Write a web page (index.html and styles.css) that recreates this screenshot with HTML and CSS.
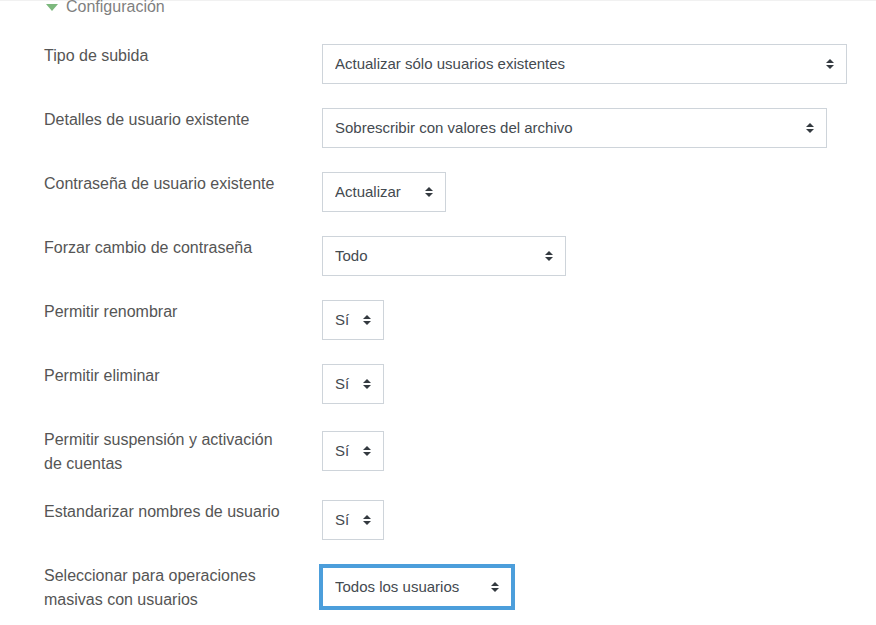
FILE: index.html
```html
<!DOCTYPE html>
<html lang="es">
<head>
<meta charset="utf-8">
<title>Configuración</title>
<link rel="stylesheet" href="styles.css">
</head>
<body>
<div class="page">
  <div class="section-head">
    <svg class="caret" width="12" height="7" viewBox="0 0 12 7"><path d="M0 0 L12 0 L6 7 Z" fill="#7cb87d"/></svg>
    <span class="section-title">Configuración</span>
  </div>
  <form class="form">
    <div class="row">
      <label class="label" for="s1">Tipo de subida</label>
      <select id="s1" class="select w-525"><option>Actualizar sólo usuarios existentes</option></select>
    </div>
    <div class="row">
      <label class="label" for="s2">Detalles de usuario existente</label>
      <select id="s2" class="select w-505"><option>Sobrescribir con valores del archivo</option></select>
    </div>
    <div class="row">
      <label class="label" for="s3">Contraseña de usuario existente</label>
      <select id="s3" class="select w-124"><option>Actualizar</option></select>
    </div>
    <div class="row">
      <label class="label" for="s4">Forzar cambio de contraseña</label>
      <select id="s4" class="select w-244"><option>Todo</option></select>
    </div>
    <div class="row">
      <label class="label" for="s5">Permitir renombrar</label>
      <select id="s5" class="select w-62"><option>Sí</option></select>
    </div>
    <div class="row">
      <label class="label" for="s6">Permitir eliminar</label>
      <select id="s6" class="select w-62"><option>Sí</option></select>
    </div>
    <div class="row row-tall">
      <label class="label" for="s7">Permitir suspensión y activación de cuentas</label>
      <select id="s7" class="select w-62"><option>Sí</option></select>
    </div>
    <div class="row">
      <label class="label" for="s8">Estandarizar nombres de usuario</label>
      <select id="s8" class="select w-62"><option>Sí</option></select>
    </div>
    <div class="row row-tall">
      <label class="label" for="s9">Seleccionar para operaciones masivas con usuarios</label>
      <select id="s9" class="select w-190 is-focused"><option>Todos los usuarios</option></select>
    </div>
  </form>
</div>
</body>
</html>
```
FILE: styles.css
```css
* { box-sizing: border-box; }

html, body {
  margin: 0;
  padding: 0;
  background: #ffffff;
}

body {
  font-family: "Liberation Sans", Arial, Helvetica, sans-serif;
  font-size: 16px;
  line-height: 24px;
  color: #555555;
  overflow: hidden;
}

.page {
  border-top: 1px solid #f1f1f1;
  height: 625px;
}

.section-head {
  display: flex;
  align-items: center;
  gap: 8px;
  padding-left: 46px;
  margin-top: -6px;
  height: 24px;
}

.caret {
  display: block;
}

.section-title {
  color: #7f7f7f;
  font-size: 16px;
}

.form {
  padding-left: 44px;
  margin-top: 25px;
}

.row {
  display: flex;
  align-items: flex-start;
  margin-bottom: 24px;
}

.label {
  width: 240px;
  margin-right: 38px;
  color: #555555;
  line-height: 24px;
  flex: none;
}

.select {
  -webkit-appearance: none;
  -moz-appearance: none;
  appearance: none;
  height: 40px;
  margin: 0;
  padding: 0 28px 0 12px;
  border: 1px solid #ced4da;
  border-radius: 0;
  background-color: #ffffff;
  background-image: url("data:image/svg+xml;utf8,<svg xmlns='http://www.w3.org/2000/svg' width='8' height='10' viewBox='0 0 8 10'><path d='M4 0 L8 4 L0 4 Z M0 6 L8 6 L4 10 Z' fill='%23343a40'/></svg>");
  background-repeat: no-repeat;
  background-position: right 12px center;
  background-size: 8px 10px;
  font-family: "Liberation Sans", Arial, Helvetica, sans-serif;
  font-size: 15px;
  line-height: 24px;
  color: #444a50;
  flex: none;
  outline: none;
}

.row-tall .select {
  margin-top: 3px;
}

.is-focused {
  border-color: #4c9edb;
  box-shadow: 0 0 0 3px #4c9edb;
}

.w-525 { width: 525px; }
.w-505 { width: 505px; }
.w-124 { width: 124px; }
.w-244 { width: 244px; }
.w-62 { width: 62px; }
.w-190 { width: 190px; }
```
